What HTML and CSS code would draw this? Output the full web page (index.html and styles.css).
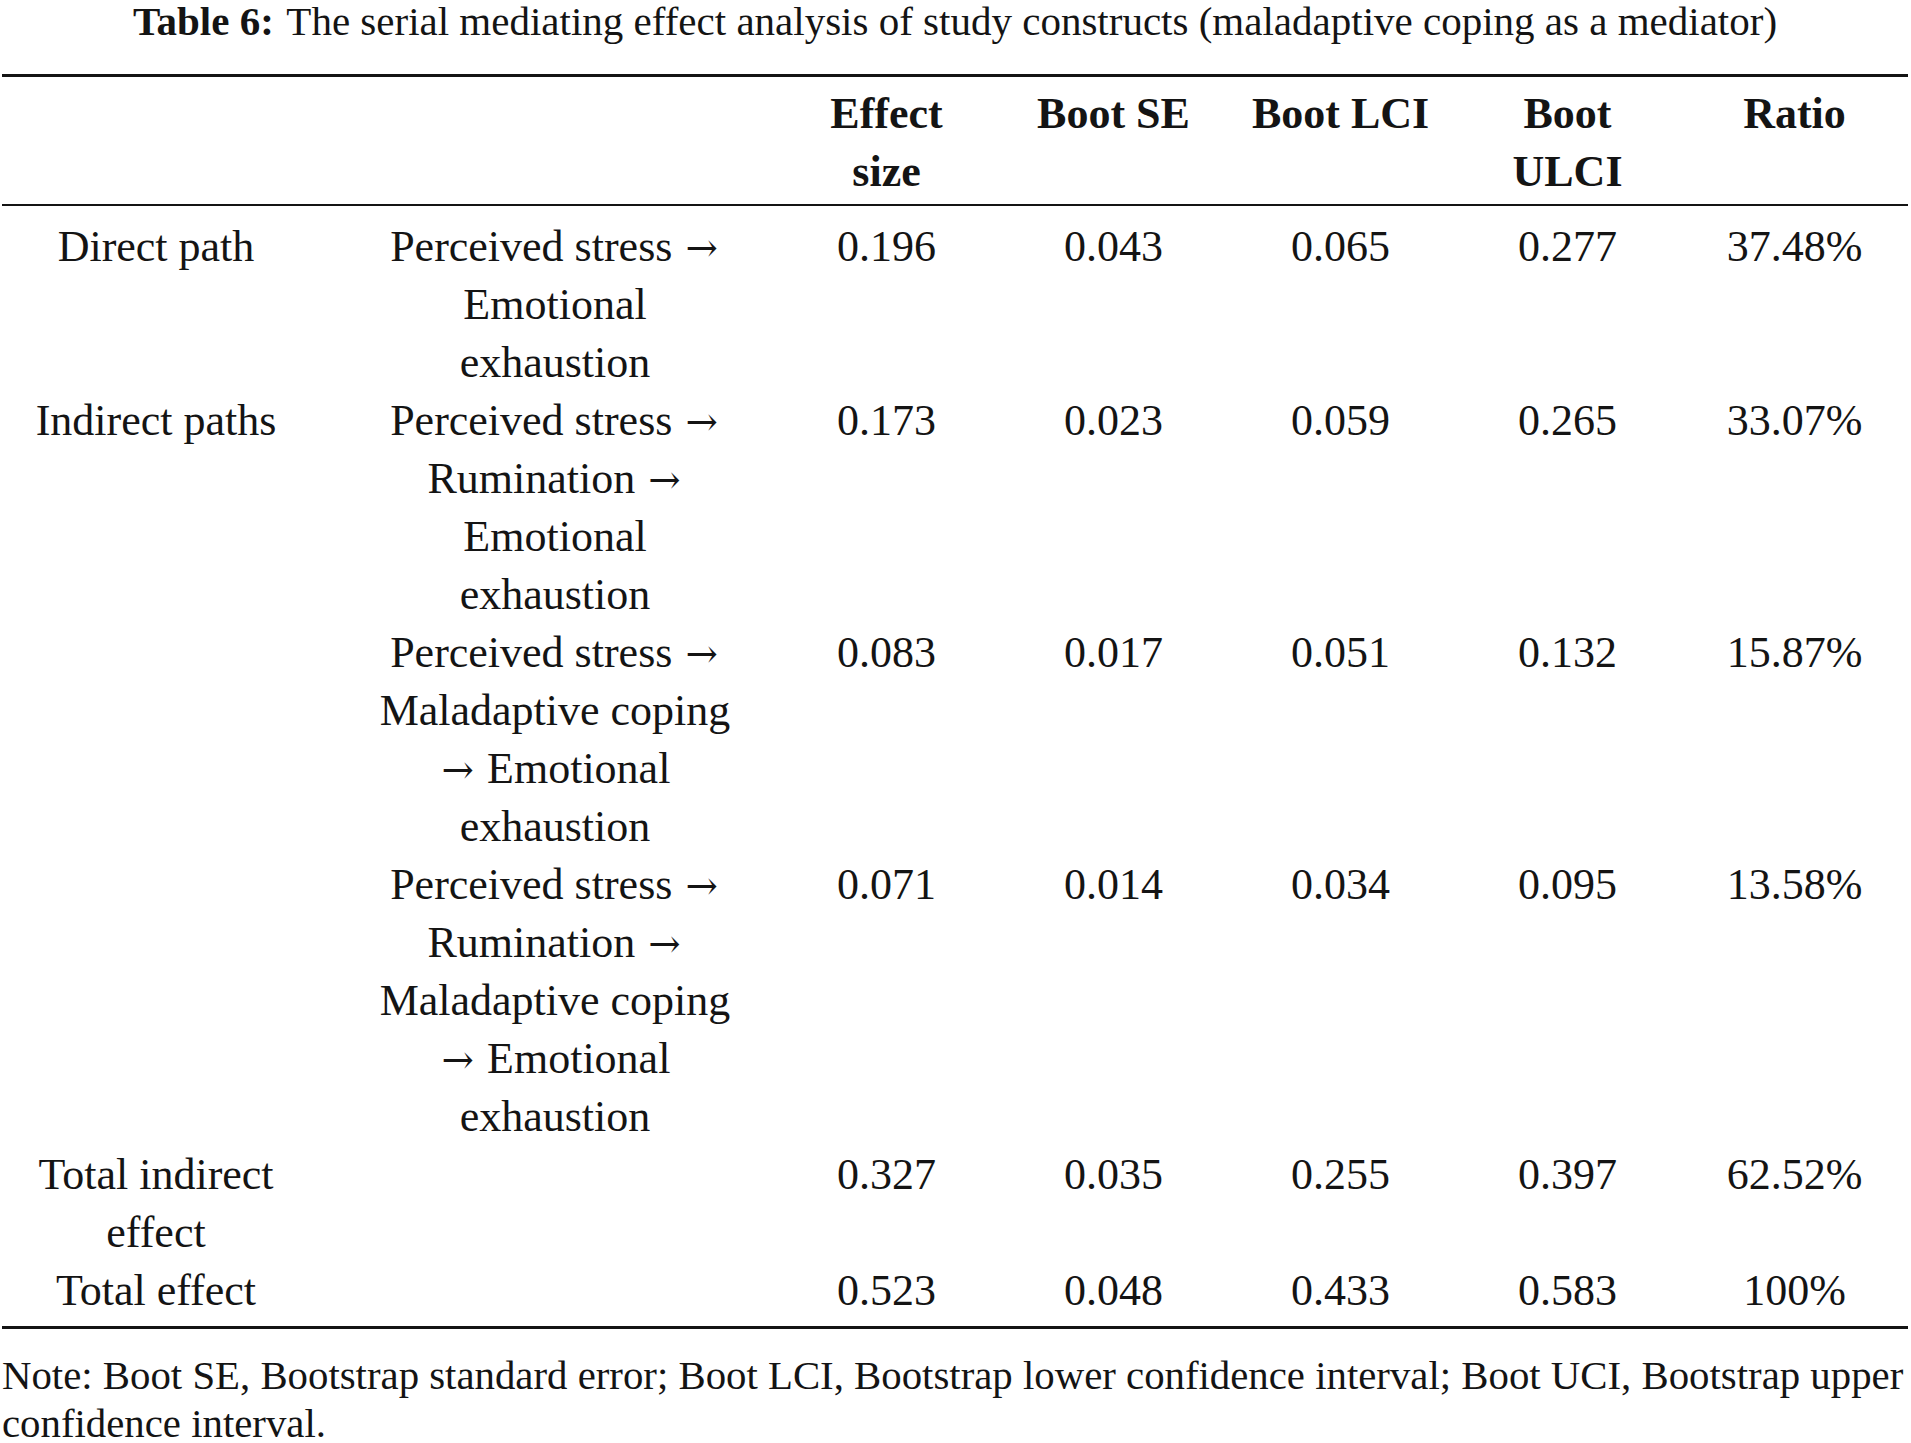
FILE: index.html
```html
<!DOCTYPE html>
<html lang="en">
<head>
<meta charset="utf-8">
<title>Table 6</title>
<link rel="stylesheet" href="styles.css">
</head>
<body>
<div class="page">
  <p class="caption"><span class="label">Table 6:</span> The serial mediating effect analysis of study constructs (maladaptive coping as a mediator)</p>
  <table class="data">
    <colgroup>
      <col class="c-path">
      <col class="c-desc">
      <col class="c-num">
      <col class="c-num">
      <col class="c-num">
      <col class="c-num">
      <col class="c-num">
    </colgroup>
    <thead>
      <tr>
        <th></th>
        <th class="desc"></th>
        <th>Effect<br>size</th>
        <th>Boot SE</th>
        <th>Boot LCI</th>
        <th>Boot<br>ULCI</th>
        <th>Ratio</th>
      </tr>
    </thead>
    <tbody>
      <tr class="first">
        <td>Direct path</td>
        <td class="desc">Perceived stress <span class="arr">→</span><br>Emotional<br>exhaustion</td>
        <td>0.196</td>
        <td>0.043</td>
        <td>0.065</td>
        <td>0.277</td>
        <td>37.48%</td>
      </tr>
      <tr>
        <td>Indirect paths</td>
        <td class="desc">Perceived stress <span class="arr">→</span><br>Rumination <span class="arr">→</span><br>Emotional<br>exhaustion</td>
        <td>0.173</td>
        <td>0.023</td>
        <td>0.059</td>
        <td>0.265</td>
        <td>33.07%</td>
      </tr>
      <tr>
        <td></td>
        <td class="desc">Perceived stress <span class="arr">→</span><br>Maladaptive coping<br><span class="arr">→</span> Emotional<br>exhaustion</td>
        <td>0.083</td>
        <td>0.017</td>
        <td>0.051</td>
        <td>0.132</td>
        <td>15.87%</td>
      </tr>
      <tr>
        <td></td>
        <td class="desc">Perceived stress <span class="arr">→</span><br>Rumination <span class="arr">→</span><br>Maladaptive coping<br><span class="arr">→</span> Emotional<br>exhaustion</td>
        <td>0.071</td>
        <td>0.014</td>
        <td>0.034</td>
        <td>0.095</td>
        <td>13.58%</td>
      </tr>
      <tr>
        <td>Total indirect effect</td>
        <td class="desc"></td>
        <td>0.327</td>
        <td>0.035</td>
        <td>0.255</td>
        <td>0.397</td>
        <td>62.52%</td>
      </tr>
      <tr class="last">
        <td>Total effect</td>
        <td class="desc"></td>
        <td>0.523</td>
        <td>0.048</td>
        <td>0.433</td>
        <td>0.583</td>
        <td>100%</td>
      </tr>
    </tbody>
  </table>
  <p class="note">Note: Boot SE, Bootstrap standard error; Boot LCI, Bootstrap lower confidence interval; Boot UCI, Bootstrap upper confidence interval.</p>
</div>
</body>
</html>
```

FILE: styles.css
```css
html, body {
  margin: 0;
  padding: 0;
  background: #ffffff;
}

body {
  font-family: "Liberation Serif", "Times New Roman", serif;
  color: #141414;
}

.page {
  width: 1906px;
  padding-left: 2px;
}

.caption {
  margin: 0;
  font-size: 41px;
  line-height: 42px;
  text-align: center;
}

.caption .label {
  font-weight: bold;
  margin-right: 3px;
}

.data {
  width: 1906px;
  margin-top: 32px;
  border-collapse: collapse;
  table-layout: fixed;
  font-size: 44px;
  line-height: 58px;
  border-top: 3px solid #141414;
  border-bottom: 3px solid #141414;
}

.c-path { width: 308px; }
.c-desc { width: 463px; }
.c-num { width: 227px; }

.data th,
.data td {
  padding: 0;
  text-align: center;
  vertical-align: top;
}

.data th {
  font-weight: bold;
}

.data thead tr {
  border-bottom: 2px solid #141414;
}

.data thead th {
  padding-top: 8px;
  padding-bottom: 3px;
}

.data .desc {
  padding-left: 60px;
  padding-right: 33px;
}

.data .arr {
  font-family: "DejaVu Serif", serif;
  font-size: 0.88em;
  line-height: 1;
  margin: 0 2px;
}

.data tbody tr.first td {
  padding-top: 12px;
}

.data tbody tr.last td {
  padding-bottom: 6px;
}

.note {
  margin: 23px 0 0;
  font-size: 40.8px;
  line-height: 48px;
}
```
